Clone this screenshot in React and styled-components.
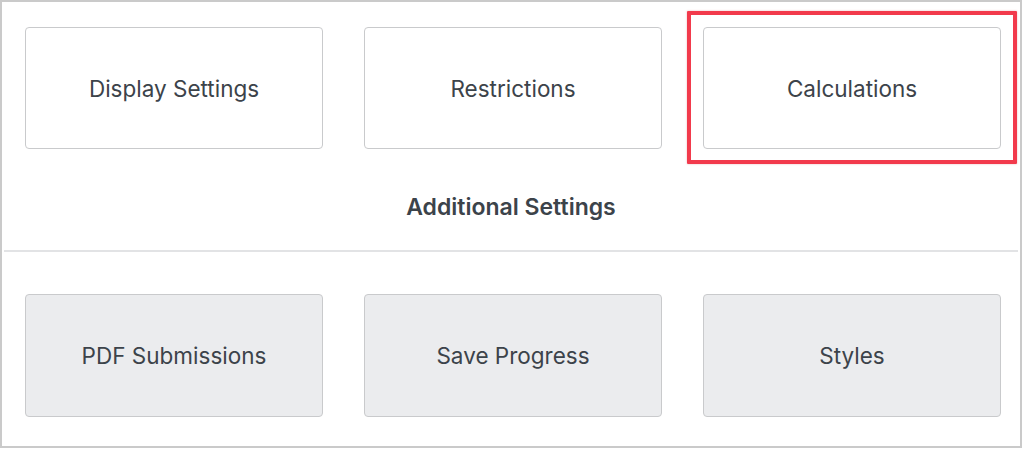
import React from "react";
import styled, { createGlobalStyle } from "styled-components";

const GlobalStyle = createGlobalStyle`
  html, body {
    margin: 0;
    padding: 0;
    background: #ffffff;
  }
  body {
    font-family: Inter, "Liberation Sans", Arial, sans-serif;
    color: #3c434a;
  }
`;

const Frame = styled.div`
  box-sizing: border-box;
  width: 1022px;
  height: 448px;
  border: 2px solid #cacaca;
  background: #ffffff;
  display: flex;
  flex-direction: column;
`;

const CardRow = styled.div`
  display: grid;
  grid-template-columns: repeat(3, 298px);
  column-gap: 41px;
  padding: 0 0 0 23px;
`;

const TopRow = styled(CardRow)`
  padding-top: 25px;
`;

const BottomRow = styled(CardRow)`
  padding-top: 42px;
`;

const CardSlot = styled.div`
  position: relative;
`;

const Card = styled.div`
  box-sizing: border-box;
  height: ${(p) => (p.$muted ? "123px" : "122px")};
  border: 1px solid #c9cacc;
  border-radius: 4px;
  background: ${(p) => (p.$muted ? "#ebecee" : "#ffffff")};
  display: flex;
  align-items: center;
  justify-content: center;
  font-size: 22.5px;
  color: #3c434a;
`;

const Highlight = styled.div`
  position: absolute;
  left: -16px;
  right: -16px;
  top: -16px;
  bottom: -15px;
  border: 4px solid #f23a4c;
  border-radius: 1px;
  box-shadow: 0 0 2px rgba(180, 30, 40, 0.35);
  pointer-events: none;
`;

const Heading = styled.div`
  margin-top: 44px;
  text-align: center;
  font-size: 23px;
  line-height: 28px;
  font-weight: 600;
  color: #3c434a;
`;

const Divider = styled.div`
  margin: 29px 2px 0;
  height: 2px;
  background: #e2e3e5;
`;

const topItems = ["Display Settings", "Restrictions", "Calculations"];
const bottomItems = ["PDF Submissions", "Save Progress", "Styles"];

export default function App() {
  return (
    <>
      <GlobalStyle />
      <Frame>
        <TopRow>
          {topItems.map((label) => (
            <CardSlot key={label}>
              <Card>{label}</Card>
              {label === "Calculations" && <Highlight />}
            </CardSlot>
          ))}
        </TopRow>
        <Heading>Additional Settings</Heading>
        <Divider />
        <BottomRow>
          {bottomItems.map((label) => (
            <CardSlot key={label}>
              <Card $muted>{label}</Card>
            </CardSlot>
          ))}
        </BottomRow>
      </Frame>
    </>
  );
}
